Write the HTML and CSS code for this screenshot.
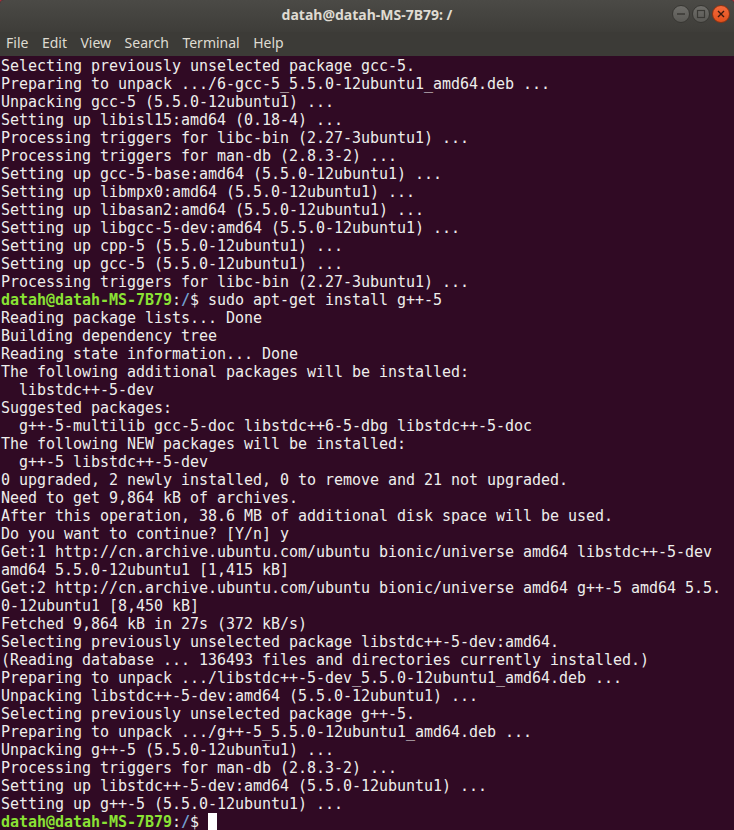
FILE: index.html
```html
<!DOCTYPE html>
<html lang="en">
<head>
    <meta charset="UTF-8">
    <title>datah@datah-MS-7B79: /</title>
    <link rel="stylesheet" href="styles.css">
</head>
<body>
    <div class="window">
        <div class="titlebar">
            <span class="title">datah@datah-MS-7B79: /</span>
            <div class="controls">
                <span class="btn">
                    <svg width="18" height="18" viewBox="0 0 18 18"><line x1="5" y1="9" x2="13" y2="9" stroke="#3a3935" stroke-width="1.4"/></svg>
                </span>
                <span class="btn">
                    <svg width="18" height="18" viewBox="0 0 18 18"><rect x="5.5" y="5.5" width="7" height="7" fill="none" stroke="#3a3935" stroke-width="1.2"/></svg>
                </span>
                <span class="btn close">
                    <svg width="18" height="18" viewBox="0 0 18 18"><path d="M6 6 L12 12 M12 6 L6 12" stroke="#3a1a0e" stroke-width="1.4"/></svg>
                </span>
            </div>
        </div>
        <nav class="menubar">
            <span>File</span>
            <span>Edit</span>
            <span>View</span>
            <span>Search</span>
            <span>Terminal</span>
            <span>Help</span>
        </nav>
<pre class="terminal">Selecting previously unselected package gcc-5.
Preparing to unpack .../6-gcc-5_5.5.0-12ubuntu1_amd64.deb ...
Unpacking gcc-5 (5.5.0-12ubuntu1) ...
Setting up libisl15:amd64 (0.18-4) ...
Processing triggers for libc-bin (2.27-3ubuntu1) ...
Processing triggers for man-db (2.8.3-2) ...
Setting up gcc-5-base:amd64 (5.5.0-12ubuntu1) ...
Setting up libmpx0:amd64 (5.5.0-12ubuntu1) ...
Setting up libasan2:amd64 (5.5.0-12ubuntu1) ...
Setting up libgcc-5-dev:amd64 (5.5.0-12ubuntu1) ...
Setting up cpp-5 (5.5.0-12ubuntu1) ...
Setting up gcc-5 (5.5.0-12ubuntu1) ...
Processing triggers for libc-bin (2.27-3ubuntu1) ...
<span class="user">datah@datah-MS-7B79</span>:<span class="path">/</span>$ sudo apt-get install g++-5
Reading package lists... Done
Building dependency tree
Reading state information... Done
The following additional packages will be installed:
  libstdc++-5-dev
Suggested packages:
  g++-5-multilib gcc-5-doc libstdc++6-5-dbg libstdc++-5-doc
The following NEW packages will be installed:
  g++-5 libstdc++-5-dev
0 upgraded, 2 newly installed, 0 to remove and 21 not upgraded.
Need to get 9,864 kB of archives.
After this operation, 38.6 MB of additional disk space will be used.
Do you want to continue? [Y/n] y
Get:1 http://cn.archive.ubuntu.com/ubuntu bionic/universe amd64 libstdc++-5-dev
amd64 5.5.0-12ubuntu1 [1,415 kB]
Get:2 http://cn.archive.ubuntu.com/ubuntu bionic/universe amd64 g++-5 amd64 5.5.
0-12ubuntu1 [8,450 kB]
Fetched 9,864 kB in 27s (372 kB/s)
Selecting previously unselected package libstdc++-5-dev:amd64.
(Reading database ... 136493 files and directories currently installed.)
Preparing to unpack .../libstdc++-5-dev_5.5.0-12ubuntu1_amd64.deb ...
Unpacking libstdc++-5-dev:amd64 (5.5.0-12ubuntu1) ...
Selecting previously unselected package g++-5.
Preparing to unpack .../g++-5_5.5.0-12ubuntu1_amd64.deb ...
Unpacking g++-5 (5.5.0-12ubuntu1) ...
Processing triggers for man-db (2.8.3-2) ...
Setting up libstdc++-5-dev:amd64 (5.5.0-12ubuntu1) ...
Setting up g++-5 (5.5.0-12ubuntu1) ...
<span class="user">datah@datah-MS-7B79</span>:<span class="path">/</span>$ <span class="cursor"> </span></pre>
    </div>
</body>
</html>
```

FILE: styles.css
```css
* {
    margin: 0;
    padding: 0;
    box-sizing: border-box;
}

body {
    background: #a8323a;
    height: 830px;
    overflow: hidden;
}

.window {
    background: #300a24;
    height: 830px;
    border-radius: 4px 4px 0 0;
    overflow: hidden;
}

.titlebar {
    height: 32px;
    background: linear-gradient(#4b4a46, #3e3d39);
    display: flex;
    align-items: center;
    justify-content: center;
    position: relative;
}

.title {
    font-family: "Noto Sans", "DejaVu Sans", sans-serif;
    font-weight: bold;
    font-size: 14px;
    color: #dfdbd2;
    margin-top: -3px;
}

.controls {
    position: absolute;
    right: 4px;
    top: 5px;
    display: flex;
    gap: 2px;
}

.btn {
    width: 18px;
    height: 18px;
    border-radius: 50%;
    background: linear-gradient(#6f6e6a, #5a5955);
    border: 1px solid #383733;
    display: flex;
    align-items: center;
    justify-content: center;
}

.btn svg {
    flex: none;
}

.btn.close {
    background: linear-gradient(#f36a3c, #e2501c);
    border-color: #8f3312;
}

.menubar {
    height: 24px;
    background: #3c3b37;
    display: flex;
    align-items: center;
    padding: 0 0 3px 6px;
    gap: 13.5px;
    font-family: "Noto Sans", "DejaVu Sans", sans-serif;
    font-size: 14px;
    color: #dfdbd2;
}

.terminal {
    font-family: "DejaVu Sans Mono", "Liberation Mono", monospace;
    font-size: 15px;
    letter-spacing: -0.03px;
    line-height: 18px;
    color: #eeeeec;
    padding: 1px 0 0 1px;
    white-space: pre;
}

.user {
    color: #8ae234;
    font-weight: bold;
}

.path {
    color: #729fcf;
    font-weight: bold;
}

.cursor {
    background: #ffffff;
}
```
